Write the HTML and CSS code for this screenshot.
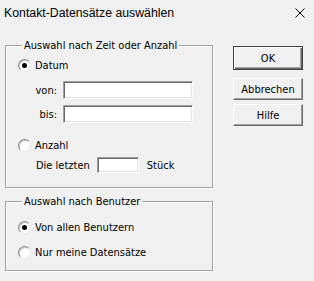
FILE: index.html
```html
<!doctype html>
<html lang="de">
  <head>
    <meta charset="UTF-8" />
    <title>Kontakt-Datensätze auswählen</title>
    <link rel="stylesheet" href="styles.css">
  </head>
  <body>
    <div class="dialog">
      <!-- Titelleiste -->
      <div class="titlebar">
        <span class="title">Kontakt-Datensätze auswählen</span>
        <svg class="close" width="10" height="10" viewBox="0 0 10 10">
          <path d="M0.5 0.5 L9.5 9.5 M9.5 0.5 L0.5 9.5" stroke="#000" stroke-width="1" fill="none" />
        </svg>
      </div>

      <div class="content">
        <div class="groups">
          <!-- Zeit oder Anzahl -->
          <fieldset class="group group-time">
            <legend>Auswahl nach Zeit oder Anzahl</legend>
            <div class="radio-row"><span class="radio checked"></span>Datum</div>
            <div class="field-row row-von">
              <span class="field-label">von:</span>
              <span class="textbox date-box"></span>
            </div>
            <div class="field-row row-bis">
              <span class="field-label">bis:</span>
              <span class="textbox date-box"></span>
            </div>
            <div class="radio-row row-anzahl"><span class="radio"></span>Anzahl</div>
            <div class="count-row">
              <span>Die letzten</span>
              <span class="textbox count-box"></span>
              <span>Stück</span>
            </div>
          </fieldset>

          <!-- Benutzer -->
          <fieldset class="group group-user">
            <legend>Auswahl nach Benutzer</legend>
            <div class="radio-row"><span class="radio checked"></span>Von allen Benutzern</div>
            <div class="radio-row row-mine"><span class="radio"></span>Nur meine Datensätze</div>
          </fieldset>
        </div>

        <div class="buttons">
          <div class="button default">OK</div>
          <div class="button btn-cancel">Abbrechen</div>
          <div class="button btn-help">Hilfe</div>
        </div>
      </div>
    </div>
  </body>
</html>
```

FILE: styles.css
```css
body {
  margin: 0;
  background: #f0f0f0;
}

.dialog {
  width: 314px;
  height: 281px;
  background: #f0f0f0;
  color: #000;
  font-family: "DejaVu Sans Condensed", "DejaVu Sans", sans-serif;
  font-size: 11px;
  overflow: hidden;
}

/* Title bar */
.titlebar {
  height: 25px;
  display: flex;
  align-items: center;
  justify-content: space-between;
  padding: 0 9px 0 4px;
}

.title {
  font-family: "Liberation Sans", Arial, sans-serif;
  font-size: 12.3px;
}

.close {
  display: block;
}

/* Main area */
.content {
  display: flex;
  padding: 14px 0 0 5px;
}

.groups {
  width: 208px;
}

.group {
  margin: 0;
  padding: 0;
  border: 1px solid #a0a0a0;
  box-shadow: inset 1px 1px 0 #fff, 1px 1px 0 #fff;
}

.group legend {
  margin-left: 4px;
  padding: 0 2px;
  line-height: 13px;
  background: #f0f0f0;
}

.group-time {
  padding: 5px 0 14px 12px;
}

.group-user {
  margin-top: 7px;
  padding: 11px 0 10px 12px;
}

/* Radio buttons */
.radio-row {
  display: flex;
  align-items: center;
  height: 16px;
  gap: 4px;
}

.radio {
  position: relative;
  width: 11px;
  height: 11px;
  border-radius: 50%;
  background: #fff;
  border: 1px solid;
  border-color: #8a8a8a #e8e8e8 #e8e8e8 #8a8a8a;
  box-shadow: inset 1px 1px 0 #c8c8c8;
}

.radio.checked::after {
  content: "";
  position: absolute;
  left: 3px;
  top: 3px;
  width: 5px;
  height: 5px;
  border-radius: 50%;
  background: #000;
}

/* Date fields */
.field-row {
  display: flex;
  align-items: center;
  gap: 6px;
}

.row-von {
  margin-top: 8px;
}

.row-bis {
  margin-top: 6px;
}

.field-label {
  width: 39px;
  text-align: right;
}

.textbox {
  display: block;
  box-sizing: border-box;
  background: #fff;
  border: 1px solid;
  border-color: #a0a0a0 #fff #fff #a0a0a0;
  box-shadow: inset 1px 1px 0 #696969, inset -1px -1px 0 #e3e3e3;
}

.date-box {
  width: 130px;
  height: 18px;
}

.row-anzahl {
  margin-top: 14px;
}

.count-row {
  display: flex;
  align-items: center;
  margin: 4px 0 0 18px;
}

.count-box {
  width: 42px;
  height: 16px;
  margin: 0 8px 0 7px;
}

.row-mine {
  margin-top: 9px;
}

/* Buttons */
.buttons {
  display: flex;
  flex-direction: column;
  margin-left: 20px;
  padding-top: 7px;
}

.button {
  box-sizing: border-box;
  width: 70px;
  height: 22px;
  display: flex;
  align-items: center;
  justify-content: center;
  background: #f0f0f0;
  border: 1px solid;
  border-color: #fff #696969 #696969 #fff;
  box-shadow: inset -1px -1px 0 #a0a0a0;
}

.button.default {
  height: 24px;
  border: 1px solid #404040;
  box-shadow: inset 1px 1px 0 #fff, inset -1px -1px 0 #696969, inset -2px -2px 0 #a0a0a0;
}

.btn-cancel {
  margin-top: 8px;
}

.btn-help {
  margin-top: 4px;
}
```
